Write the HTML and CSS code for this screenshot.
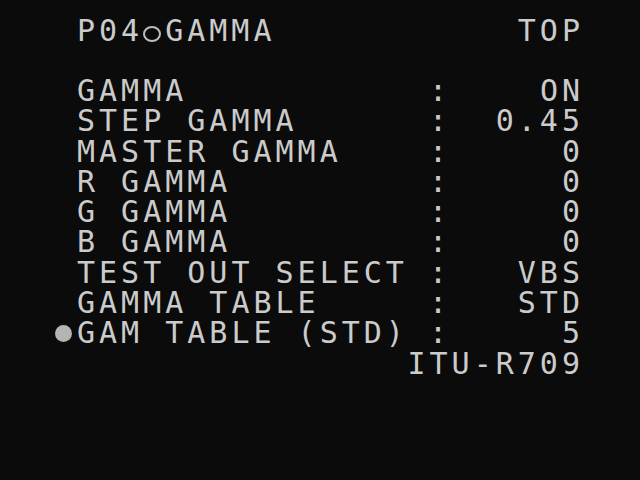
FILE: index.html
```html
<!DOCTYPE html>
<html lang="en">
<head>
  <meta charset="UTF-8" />
  <title>P04 GAMMA</title>
  <link rel="stylesheet" href="styles.css">
</head>
<body>

<div class="osd">
  <!-- page header -->
  <div class="title-row">
    <span class="title">P04<span class="ring"></span>GAMMA</span>
    <span class="page">TOP</span>
  </div>

  <div class="menu">
    <div class="item"><span class="mark"></span><span class="label">GAMMA</span><span class="sep">:</span><span class="value">ON</span></div>
    <div class="item"><span class="mark"></span><span class="label">STEP GAMMA</span><span class="sep">:</span><span class="value">0.45</span></div>
    <div class="item"><span class="mark"></span><span class="label">MASTER GAMMA</span><span class="sep">:</span><span class="value">0</span></div>
    <div class="item"><span class="mark"></span><span class="label">R GAMMA</span><span class="sep">:</span><span class="value">0</span></div>
    <div class="item"><span class="mark"></span><span class="label">G GAMMA</span><span class="sep">:</span><span class="value">0</span></div>
    <div class="item"><span class="mark"></span><span class="label">B GAMMA</span><span class="sep">:</span><span class="value">0</span></div>
    <div class="item"><span class="mark"></span><span class="label">TEST OUT SELECT</span><span class="sep">:</span><span class="value">VBS</span></div>
    <div class="item"><span class="mark"></span><span class="label">GAMMA TABLE</span><span class="sep">:</span><span class="value">STD</span></div>
    <div class="item selected"><span class="mark"></span><span class="label">GAM TABLE (STD)</span><span class="sep">:</span><span class="value">5</span></div>
    <div class="item"><span class="mark"></span><span class="value wide">ITU-R709</span></div>
  </div>
</div>

</body>
</html>
```

FILE: styles.css
```css
* {
  margin: 0;
  padding: 0;
  box-sizing: border-box;
}

html, body {
  height: 100%;
}

body {
  background-color: #0b0b0b;
  color: #cbcbcb;
  font-family: "DejaVu Sans Mono", monospace;
  font-size: 30px;
  letter-spacing: 4px;
  overflow: hidden;
}

.osd {
  padding: 16px 56px 0 55px;
}

.title-row {
  display: flex;
  justify-content: space-between;
  height: 30px;
  line-height: 30px;
  padding-left: 22px;
  white-space: pre;
}

.ring {
  display: inline-block;
  width: 18px;
  height: 16px;
  margin: 0 4px 0 0;
  border: 2px solid #bdbdbd;
  border-radius: 50%;
  vertical-align: -1px;
}

.menu {
  margin-top: 30px;
}

.item {
  display: grid;
  grid-template-columns: 22px 352px 22px 1fr;
  height: 30.3px;
  line-height: 30.3px;
  white-space: pre;
}

.value {
  text-align: right;
}

.value.wide {
  grid-column: 2 / -1;
}

.selected .mark::before {
  content: "";
  display: block;
  width: 17px;
  height: 17px;
  margin-top: 7px;
  border-radius: 50%;
  background-color: #b4b4b4;
}
```
